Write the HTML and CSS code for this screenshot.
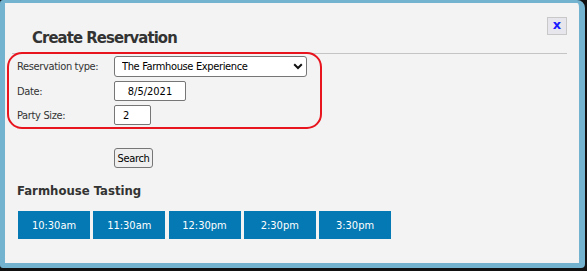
FILE: index.html
```html
<!DOCTYPE html>
<html lang="en">
<head>
    <meta charset="UTF-8">
    <meta name="viewport" content="width=device-width, initial-scale=1.0">
    <title>Create Reservation</title>
    <link rel="stylesheet" href="styles.css">
</head>
<body>
    <div class="dialog">
        <div class="dialog-header">
            <h2>Create Reservation</h2>
            <button class="close-btn" type="button">x</button>
        </div>

        <form class="reservation-form">
            <div class="fields">
                <label for="tipo">Reservation type:</label>
                <span class="select-wrap">
                    <select id="tipo">
                        <option>The Farmhouse Experience</option>
                    </select>
                    <svg class="chevron" width="10" height="7" viewBox="0 0 10 7"><path d="M1.2 1.3 L5 5 L8.8 1.3" fill="none" stroke="#111" stroke-width="2"/></svg>
                </span>

                <label for="data">Date:</label>
                <input type="text" id="data" class="date-input" value="8/5/2021">

                <label for="pessoas">Party Size:</label>
                <input type="text" id="pessoas" class="size-input" value="2">
            </div>

            <button type="submit" class="search-btn">Search</button>
        </form>

        <h3>Farmhouse Tasting</h3>
        <div class="times">
            <button type="button">10:30am</button>
            <button type="button">11:30am</button>
            <button type="button">12:30pm</button>
            <button type="button">2:30pm</button>
            <button type="button">3:30pm</button>
        </div>
    </div>
</body>
</html>
```

FILE: styles.css
```css
body {
    margin: 0;
    background-color: #111;
    font-family: "DejaVu Sans Condensed", "DejaVu Sans", sans-serif;
    font-stretch: condensed;
}

/* Caixa do dialogo */
.dialog {
    width: 585px;
    height: 268px;
    box-sizing: border-box;
    background-color: #f2f3f2;
    border-style: solid;
    border-color: #74b3cf;
    border-width: 3px 6px 5px 5px;
    border-radius: 3px 8px 4px 3px;
}

.dialog-header {
    display: flex;
    justify-content: space-between;
    align-items: flex-start;
    margin: 0 12px 0 7px;
    padding: 14px 0 0 20px;
    height: 36px;
    border-bottom: 1px solid #c4c4c4;
}

h2 {
    margin: 11px 0 0 0;
    font-size: 16.5px;
    letter-spacing: -0.9px;
    color: #333;
}

.close-btn {
    width: 20px;
    height: 18px;
    padding: 0 0 2px 0;
    border: 1px solid #c8c8c8;
    background-color: #e6e6ec;
    color: #1a1aff;
    font-family: "DejaVu Sans", sans-serif;
    font-weight: bold;
    font-size: 13px;
    line-height: 14px;
}

.reservation-form {
    margin: -2px 0 0 2px;
}

/* Campos com contorno vermelho */
.fields {
    width: 315px;
    box-sizing: border-box;
    border: 2px solid #e8141e;
    border-radius: 15px;
    padding: 2px 0 2px 8px;
    display: grid;
    grid-template-columns: 97px auto;
    row-gap: 4px;
    align-items: center;
    justify-items: start;
    font-size: 11px;
}

.fields label {
    color: #333;
    letter-spacing: -0.35px;
}

.select-wrap {
    position: relative;
    display: block;
}

.select-wrap select {
    appearance: none;
    width: 193px;
    height: 21px;
    border: 1px solid #767676;
    border-radius: 3px;
    background-color: #fff;
    padding: 0 0 0 7px;
    font-family: inherit;
    font-size: 11px;
    letter-spacing: -0.35px;
    color: #000;
}

.chevron {
    position: absolute;
    right: 4px;
    top: 7px;
}

.fields input {
    height: 20px;
    box-sizing: border-box;
    border: 1px solid #767676;
    border-radius: 2px;
    background-color: #fff;
    font-family: inherit;
    font-size: 11px;
    color: #000;
}

.date-input {
    width: 72px;
    text-align: center;
}

.size-input {
    width: 37px;
    padding: 0 0 0 8px;
}

.search-btn {
    display: block;
    margin: 19px 0 0 107px;
    width: 39px;
    height: 20px;
    padding: 0;
    border: 1px solid #767676;
    border-radius: 3px;
    background-color: #efefef;
    font-family: inherit;
    font-size: 11px;
    letter-spacing: -0.3px;
    color: #000;
}

h3 {
    margin: 15px 0 0 12px;
    font-size: 13px;
    color: #333;
}

.times {
    display: flex;
    gap: 3.25px;
    margin: 13px 0 0 13px;
}

.times button {
    width: 72px;
    height: 28px;
    border: none;
    background-color: #0479b3;
    color: #fff;
    font-family: inherit;
    font-size: 11px;
}
```
